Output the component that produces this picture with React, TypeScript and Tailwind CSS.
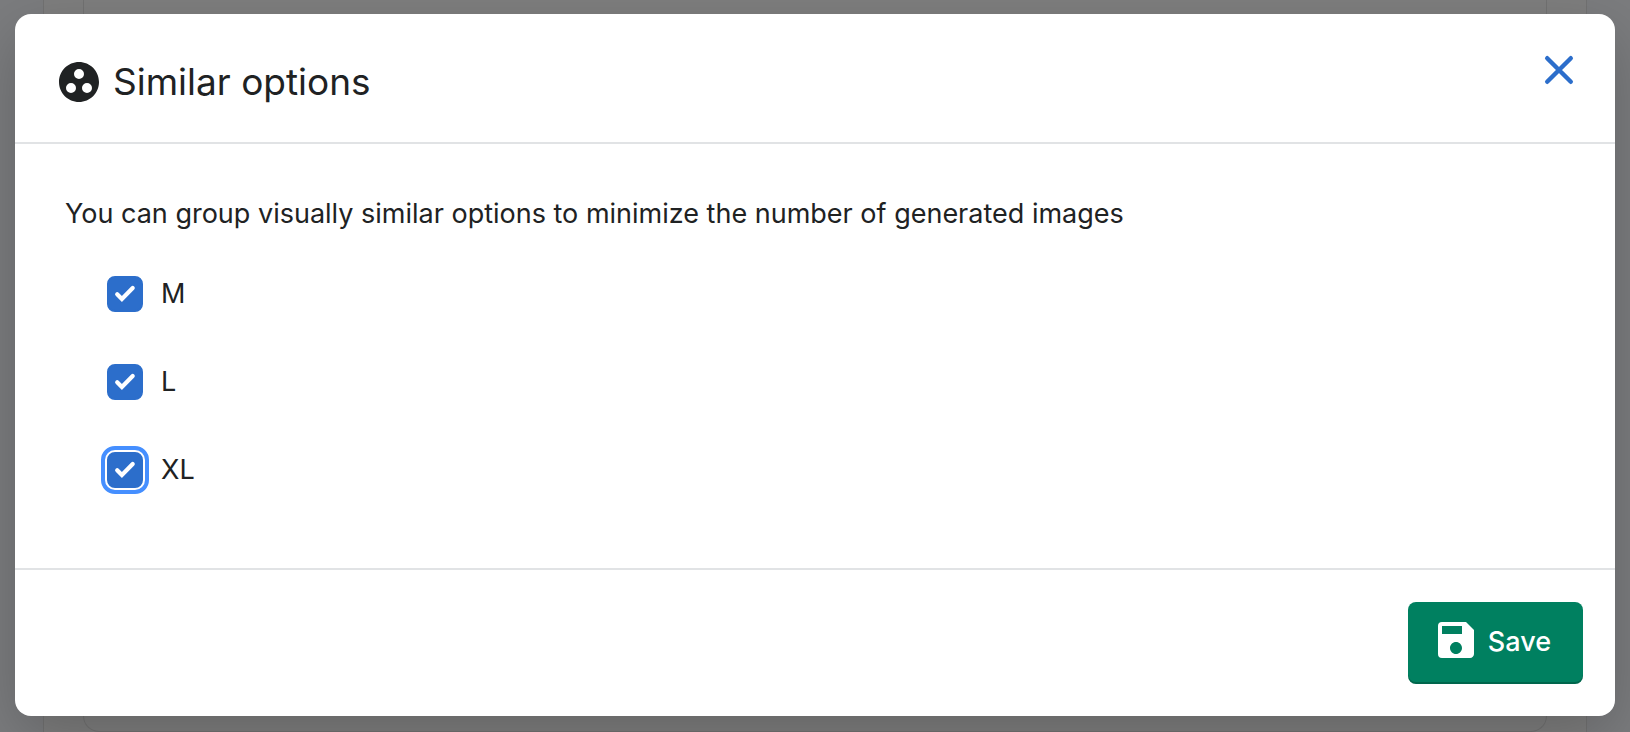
import { useState } from "react";
import { MdGroupWork, MdSave } from "react-icons/md";

const OPTIONS = ["M", "L", "XL"];

type OptionProps = {
  label: string;
  checked: boolean;
  focused: boolean;
  onToggle: () => void;
};

function Option({ label, checked, focused, onToggle }: OptionProps) {
  return (
    <li>
      <label className="flex w-fit items-center gap-[18px]">
        <span className="grid size-9">
          <input
            type="checkbox"
            checked={checked}
            autoFocus={focused}
            onChange={onToggle}
            className="col-start-1 row-start-1 size-9 appearance-none rounded-lg border-2 border-[#8c9196] bg-white outline-[#458fff] checked:border-[#2c6ecb] checked:bg-[#2c6ecb] focus:outline-4 focus:outline-offset-2"
          />
          {checked && (
            <svg
              viewBox="0 0 36 36"
              fill="none"
              stroke="#fff"
              strokeWidth="4.2"
              strokeLinecap="round"
              strokeLinejoin="miter"
              aria-hidden="true"
              className="pointer-events-none col-start-1 row-start-1 size-9"
            >
              <path d="M10.2 18.2l4.7 4.7L25.7 12" />
            </svg>
          )}
        </span>
        {label}
      </label>
    </li>
  );
}

export default function App() {
  const [selected, setSelected] = useState<string[]>(OPTIONS);

  const toggle = (label: string) =>
    setSelected((current) =>
      current.includes(label) ? current.filter((item) => item !== label) : [...current, label],
    );

  return (
    <div className="relative grid min-h-screen overflow-hidden bg-[#7b7c7e] font-['Inter',sans-serif] text-[#202223]">
      <div
        className="col-start-1 row-start-1 mx-[43px] flex border-x border-[#727272] bg-[#7e7e7e] px-[39px]"
        aria-hidden="true"
      >
        <div className="flex-1 rounded-b-2xl border-x border-b border-[#727272]" />
      </div>
      <div
        role="dialog"
        aria-labelledby="dialog-title"
        className="col-start-1 row-start-1 mx-[15px] mt-3.5 mb-4 flex flex-col rounded-2xl bg-white shadow-[0_20px_60px_rgba(0,0,0,0.2)]"
      >
        <header className="flex items-start justify-between border-b-2 border-[#e1e3e5] py-9 pr-9 pl-10">
          <h1 id="dialog-title" className="flex items-center gap-2.5 pt-2 text-[37px] leading-12">
            <MdGroupWork className="size-12" aria-hidden="true" />
            Similar options
          </h1>
          <button type="button" aria-label="Close" className="text-[#2c6ecb]">
            <svg viewBox="0 0 40 40" fill="none" stroke="currentColor" strokeWidth="4.4" strokeLinecap="round" className="size-10">
              <path d="M8.2 8.2l23.6 23.6M31.8 8.2L8.2 31.8" />
            </svg>
          </button>
        </header>
        <main className="flex-1 px-[50px] pt-[50px] pb-[78px] text-[27px] leading-10">
          <p>You can group visually similar options to minimize the number of generated images</p>
          <ul className="mt-10 ml-[42px] flex flex-col gap-12">
            {OPTIONS.map((label) => (
              <Option
                key={label}
                label={label}
                checked={selected.includes(label)}
                focused={label === "XL"}
                onToggle={() => toggle(label)}
              />
            ))}
          </ul>
        </main>
        <footer className="flex justify-end border-t-2 border-[#e1e3e5] p-8">
          <button
            type="button"
            className="flex items-start gap-2 rounded-lg bg-[#008060] pt-3.5 pr-8 pb-4 pl-6 text-[27px] leading-[52px] font-medium text-white shadow-[inset_0_-2px_0_rgba(0,0,0,0.2)]"
          >
            <MdSave className="size-12" aria-hidden="true" />
            Save
          </button>
        </footer>
      </div>
    </div>
  );
}
